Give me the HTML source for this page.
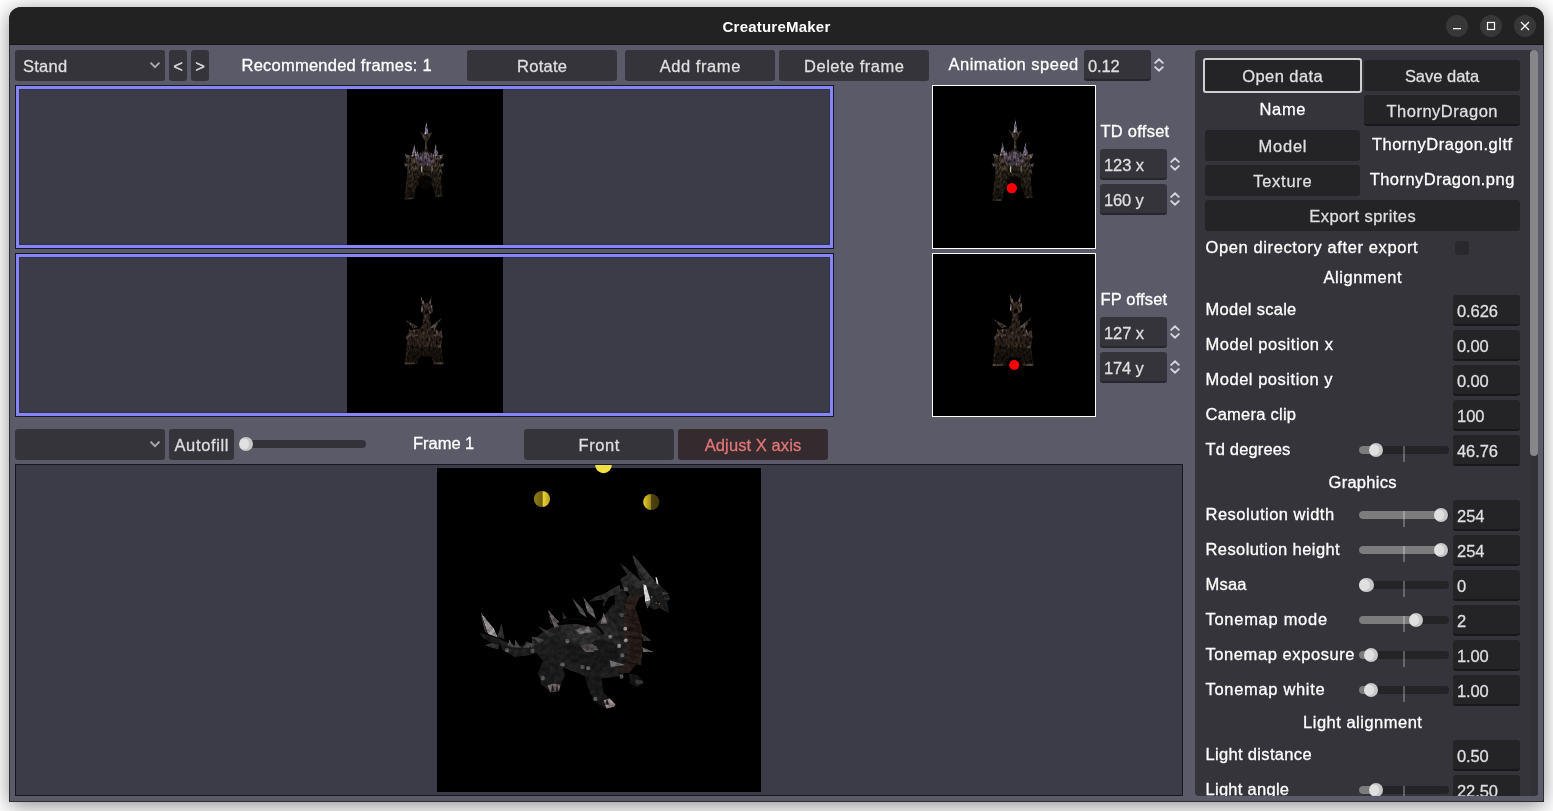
<!DOCTYPE html>
<html><head><meta charset="utf-8"><title>CreatureMaker</title>
<style>
html,body{margin:0;padding:0;}
body{width:1553px;height:811px;overflow:hidden;background:#fff;position:relative;font-family:"Liberation Sans", "DejaVu Sans", sans-serif;font-size:16.5px;color:#fff;}
.a{position:absolute;box-sizing:border-box;white-space:nowrap;}
.t{-webkit-text-stroke:0.3px currentColor;}
#win{left:9px;top:7px;width:1535px;height:795px;background:#5a5a69;border-radius:12px 12px 0 0;box-shadow:0 3.5px 20px rgba(0,0,0,.44);overflow:hidden;will-change:transform;}
#tb{left:0;top:0;width:1535px;height:37px;background:#222222;border-bottom:1px solid #161616;height:38px;}
#title{left:0;width:1535px;top:1px;height:38px;line-height:38px;letter-spacing:0.22px;text-align:center;font-weight:bold;font-size:15px;color:#fff;}
.wb{width:22px;height:22px;border-radius:11px;background:#373737;top:8px;}
.btn{background:#34343a;border-radius:3px;color:#dfdfdf;text-align:center;height:31px;line-height:33px;}
.sb .btn{background:#242427;}
.lbl{color:#fff;height:31px;line-height:31px;}
.le{background:#34343a;border-radius:3px;border-bottom:2px solid #26262d;color:#dfdfdf;height:31px;line-height:32px;padding-left:4px;text-align:left;}
.sb .le{background:#242427;border-bottom-color:#18181a;}
.fp{background:#3c3c48;border:1px solid #17172c;}
.fp i{position:absolute;left:0;top:0;right:0;bottom:0;border:3px solid #8585f4;box-shadow:inset 0 0 0 1px rgba(30,30,90,.4);}
.blk{background:#000;}
.pv{background:#000;border:1px solid #fff;}
.trk{height:8px;border-radius:4px;background:#242427;}
.fil{height:8px;border-radius:4px;background:#7c7c7d;}
.grb{width:14.4px;height:14.4px;border-radius:8px;background:radial-gradient(circle at 34% 50%,#e0e0e0 0,#e0e0e0 44%,#c7c7c7 50%);}
.tick{width:2px;height:16px;background:rgba(255,255,255,.26);}
</style></head>
<body>
<div class="a" id="win">
<div class="a" id="tb"></div>
<div class="a" id="title">CreatureMaker</div>
<div class="a wb" style="left:1437px;top:8px;width:22px;height:22px;"><svg width="22" height="22" viewBox="0 0 22 22" style="display:block"><path d="M7 13.7h8" stroke="#fff" stroke-width="1.3" fill="none"/></svg></div>
<div class="a wb" style="left:1471px;top:8px;width:22px;height:22px;"><svg width="22" height="22" viewBox="0 0 22 22" style="display:block"><rect x="7.5" y="7.5" width="7" height="7" stroke="#fff" stroke-width="1.2" fill="none"/></svg></div>
<div class="a wb" style="left:1505px;top:8px;width:22px;height:22px;"><svg width="22" height="22" viewBox="0 0 22 22" style="display:block"><path d="M7 7l8 8M15 7l-8 8" stroke="#fff" stroke-width="1.15" fill="none"/></svg></div>
<div class="a btn" style="left:6px;top:43px;width:150px;height:31px;text-align:left;padding-left:8px;"><span class="t" style="letter-spacing:0.248px;margin-right:-0.248px">Stand</span></div>
<svg class="a" style="left:140px;top:54px" width="12" height="8" viewBox="0 0 12 8"><path d="M1.5 1.6L6 6.1L10.5 1.6" stroke="#a9a9ae" stroke-width="2" fill="none" stroke-linecap="butt" stroke-linejoin="miter"/></svg>
<div class="a btn" style="left:160px;top:43px;width:18px;height:31px;"><span class="t" style="letter-spacing:-0.218px;margin-right:0.218px">&lt;</span></div>
<div class="a btn" style="left:182px;top:43px;width:18px;height:31px;"><span class="t" style="letter-spacing:-0.218px;margin-right:0.218px">&gt;</span></div>
<div class="a lbl" id="t_rec" style="left:232.5px;top:43px;height:31px;"><span class="t" style="letter-spacing:0.241px;margin-right:-0.241px">Recommended frames: 1</span></div>
<div class="a btn" style="left:458px;top:43px;width:150px;height:31px;"><span class="t" style="letter-spacing:0.284px;margin-right:-0.284px">Rotate</span></div>
<div class="a btn" style="left:616px;top:43px;width:150px;height:31px;"><span class="t" style="letter-spacing:0.569px;margin-right:-0.569px">Add frame</span></div>
<div class="a btn" style="left:770px;top:43px;width:150px;height:31px;"><span class="t" style="letter-spacing:0.487px;margin-right:-0.487px">Delete frame</span></div>
<div class="a lbl" id="t_anim" style="left:939.5px;top:42px;height:31px;"><span class="t" style="letter-spacing:0.488px;margin-right:-0.488px">Animation speed</span></div>
<div class="a le" style="left:1075px;top:43px;width:67px;height:31px;"><span class="t" style="letter-spacing:-0.121px;margin-right:0.121px">0.12</span></div>
<svg class="a" style="left:1144px;top:50px" width="12" height="16" viewBox="0 0 12 16"><path d="M2.2 5.9L6 2.4L9.8 5.9M2.2 10.1L6 13.6L9.8 10.1" stroke="#d6d6de" stroke-width="1.9" fill="none" stroke-linecap="round" stroke-linejoin="miter"/></svg>
<div class="a fp" style="left:6px;top:78px;width:819px;height:164px;"><i></i></div>
<div class="a blk" style="left:338px;top:82px;width:156px;height:156px;"><svg class="a" style="left:0px;top:0px" width="156" height="156" viewBox="0 0 164 164"><filter id="btd156" x="-5%" y="-5%" width="110%" height="110%" color-interpolation-filters="sRGB"><feTurbulence type="fractalNoise" baseFrequency="0.5 0.28" numOctaves="2" seed="5" result="n0"/><feColorMatrix in="n0" type="matrix" values="1 0 0 0 0  1 0 0 0 0  1 0 0 0 0  0 0 0 0 1" result="n"/><feComposite in="SourceGraphic" in2="n" operator="arithmetic" k1="1.7" k2="-0.2" k3="0" k4="0" result="m"/><feComposite in="m" in2="SourceGraphic" operator="in" result="c"/><feGaussianBlur in="c" stdDeviation="0.45"/></filter><linearGradient id="gbtd156" gradientUnits="userSpaceOnUse" x1="0" x2="0" y1="70" y2="112"><stop offset="0" stop-color="#000" stop-opacity="0"/><stop offset="1" stop-color="#000" stop-opacity=".5"/></linearGradient><g filter="url(#btd156)"><polygon points="62.4,72.2 66.9,69.7 73.4,69.0 79.8,65.1 82.4,63.8 85.0,65.1 91.5,69.0 96.7,69.7 99.9,72.2 98.0,79.4 99.9,87.1 98.6,97.5 100.5,107.8 101.2,113.0 92.8,113.0 90.8,104.0 86.3,97.5 82.4,94.9 78.5,97.5 72.7,104.0 70.1,115.6 60.4,116.3 60.4,107.8 62.4,97.5 63.7,85.8 61.7,79.4" fill="#3f3529"/><polygon points="65.6,72.9 73.4,70.3 78.5,76.8 74.7,85.8 66.9,87.1" fill="#5a4c3c"/><polygon points="86.3,76.8 91.5,70.3 98.0,72.9 97.3,85.8 90.2,85.8" fill="#54483a"/><polygon points="63.0,89.7 68.8,87.1 72.1,97.5 68.8,107.8 61.7,107.8" fill="#4a3e30"/><polygon points="92.8,87.1 98.6,89.7 99.9,105.3 94.1,107.8 90.8,97.5" fill="#463a2e"/><polygon points="71.4,74.2 79.8,67.7 82.4,63.8 85.7,68.4 92.1,74.8 86.3,82.0 82.4,79.4 78.5,82.0" fill="#75667e" opacity=".8"/><polygon points="76.2,44.4 81.8,47.7 85.0,47.7 90.8,44.4 87.0,50.9 84.4,55.4 82.2,55.4 79.6,50.9" fill="#55473a"/><polygon points="83.3,33.5 81.0,47.7 85.9,47.7" fill="#c0b0d2"/><polygon points="60.4,68.0 62.4,73.5 66.9,70.3" fill="#7c6e74"/><polygon points="101.8,68.0 99.9,73.5 95.4,70.3" fill="#7c6e74"/><polygon points="59.1,77.4 61.7,83.3 64.3,79.4" fill="#66585a"/><polygon points="102.9,77.4 100.3,83.3 98.0,79.4" fill="#66585a"/><polygon points="74.0,63.8 72.1,73.2 76.0,73.2" fill="#8a7c90"/><polygon points="92.1,63.8 90.2,73.2 94.1,73.2" fill="#8a7c90"/><polygon points="82.4,61.9 80.5,71.6 84.8,71.6" fill="#9888a0"/><polygon points="81.9,55.4 84.5,55.4 84.8,65.1 81.6,65.1" fill="#4a3e32"/><polygon points="70.5,57.1 67.8,70.6 73.9,69.9" fill="#a898b0"/><polygon points="93.4,57.1 90.6,69.9 96.7,70.6" fill="#a898b0"/><polygon points="77.6,65.1 76.5,73.2 79.3,73.2" fill="#6e6270"/><polygon points="88.6,65.1 87.2,73.2 90.1,73.2" fill="#6e6270"/><polygon points="64.9,79.4 62.7,89.7 66.9,88.4" fill="#5c5048"/><polygon points="98.6,79.4 96.7,88.4 100.8,89.7" fill="#5c5048"/><polygon points="77.9,81.3 79.2,81.3 79.3,88.4 78.0,88.4" fill="#e8dcb8"/><polygon points="88.2,80.7 89.7,80.7 89.8,87.1 88.4,87.1" fill="#e8dcb8"/><polygon points="74.9,93.6 82.4,89.7 89.5,93.6 88.2,102.7 82.4,107.8 76.0,102.7" fill="#120e0a"/><polygon points="60.7,114.3 70.1,114.1 70.1,116.0 60.7,116.3" fill="#8a7a68"/><polygon points="92.8,111.5 101.2,111.2 101.2,113.3 92.8,113.5" fill="#8a7a68"/></g><rect x="55" y="70" width="56" height="58" fill="url(#gbtd156)"/></svg></div>
<div class="a pv" style="left:923px;top:78px;width:164px;height:164px;"><svg class="a" style="left:-1px;top:-1px" width="164" height="164" viewBox="0 0 164 164"><filter id="btd164" x="-5%" y="-5%" width="110%" height="110%" color-interpolation-filters="sRGB"><feTurbulence type="fractalNoise" baseFrequency="0.5 0.28" numOctaves="2" seed="5" result="n0"/><feColorMatrix in="n0" type="matrix" values="1 0 0 0 0  1 0 0 0 0  1 0 0 0 0  0 0 0 0 1" result="n"/><feComposite in="SourceGraphic" in2="n" operator="arithmetic" k1="1.7" k2="-0.2" k3="0" k4="0" result="m"/><feComposite in="m" in2="SourceGraphic" operator="in" result="c"/><feGaussianBlur in="c" stdDeviation="0.45"/></filter><linearGradient id="gbtd164" gradientUnits="userSpaceOnUse" x1="0" x2="0" y1="70" y2="112"><stop offset="0" stop-color="#000" stop-opacity="0"/><stop offset="1" stop-color="#000" stop-opacity=".5"/></linearGradient><g filter="url(#btd164)"><polygon points="62.4,72.2 66.9,69.7 73.4,69.0 79.8,65.1 82.4,63.8 85.0,65.1 91.5,69.0 96.7,69.7 99.9,72.2 98.0,79.4 99.9,87.1 98.6,97.5 100.5,107.8 101.2,113.0 92.8,113.0 90.8,104.0 86.3,97.5 82.4,94.9 78.5,97.5 72.7,104.0 70.1,115.6 60.4,116.3 60.4,107.8 62.4,97.5 63.7,85.8 61.7,79.4" fill="#3f3529"/><polygon points="65.6,72.9 73.4,70.3 78.5,76.8 74.7,85.8 66.9,87.1" fill="#5a4c3c"/><polygon points="86.3,76.8 91.5,70.3 98.0,72.9 97.3,85.8 90.2,85.8" fill="#54483a"/><polygon points="63.0,89.7 68.8,87.1 72.1,97.5 68.8,107.8 61.7,107.8" fill="#4a3e30"/><polygon points="92.8,87.1 98.6,89.7 99.9,105.3 94.1,107.8 90.8,97.5" fill="#463a2e"/><polygon points="71.4,74.2 79.8,67.7 82.4,63.8 85.7,68.4 92.1,74.8 86.3,82.0 82.4,79.4 78.5,82.0" fill="#75667e" opacity=".8"/><polygon points="76.2,44.4 81.8,47.7 85.0,47.7 90.8,44.4 87.0,50.9 84.4,55.4 82.2,55.4 79.6,50.9" fill="#55473a"/><polygon points="83.3,33.5 81.0,47.7 85.9,47.7" fill="#c0b0d2"/><polygon points="60.4,68.0 62.4,73.5 66.9,70.3" fill="#7c6e74"/><polygon points="101.8,68.0 99.9,73.5 95.4,70.3" fill="#7c6e74"/><polygon points="59.1,77.4 61.7,83.3 64.3,79.4" fill="#66585a"/><polygon points="102.9,77.4 100.3,83.3 98.0,79.4" fill="#66585a"/><polygon points="74.0,63.8 72.1,73.2 76.0,73.2" fill="#8a7c90"/><polygon points="92.1,63.8 90.2,73.2 94.1,73.2" fill="#8a7c90"/><polygon points="82.4,61.9 80.5,71.6 84.8,71.6" fill="#9888a0"/><polygon points="81.9,55.4 84.5,55.4 84.8,65.1 81.6,65.1" fill="#4a3e32"/><polygon points="70.5,57.1 67.8,70.6 73.9,69.9" fill="#a898b0"/><polygon points="93.4,57.1 90.6,69.9 96.7,70.6" fill="#a898b0"/><polygon points="77.6,65.1 76.5,73.2 79.3,73.2" fill="#6e6270"/><polygon points="88.6,65.1 87.2,73.2 90.1,73.2" fill="#6e6270"/><polygon points="64.9,79.4 62.7,89.7 66.9,88.4" fill="#5c5048"/><polygon points="98.6,79.4 96.7,88.4 100.8,89.7" fill="#5c5048"/><polygon points="77.9,81.3 79.2,81.3 79.3,88.4 78.0,88.4" fill="#e8dcb8"/><polygon points="88.2,80.7 89.7,80.7 89.8,87.1 88.4,87.1" fill="#e8dcb8"/><polygon points="74.9,93.6 82.4,89.7 89.5,93.6 88.2,102.7 82.4,107.8 76.0,102.7" fill="#120e0a"/><polygon points="60.7,114.3 70.1,114.1 70.1,116.0 60.7,116.3" fill="#8a7a68"/><polygon points="92.8,111.5 101.2,111.2 101.2,113.3 92.8,113.5" fill="#8a7a68"/></g><rect x="55" y="70" width="56" height="58" fill="url(#gbtd164)"/><circle cx="79.8" cy="103.1" r="5.2" fill="#fb0207"/></svg></div>
<div class="a fp" style="left:6px;top:246px;width:819px;height:164px;"><i></i></div>
<div class="a blk" style="left:338px;top:250px;width:156px;height:156px;"><svg class="a" style="left:0px;top:0px" width="156" height="156" viewBox="0 0 164 164"><filter id="bfp156" x="-5%" y="-5%" width="110%" height="110%" color-interpolation-filters="sRGB"><feTurbulence type="fractalNoise" baseFrequency="0.5 0.28" numOctaves="2" seed="9" result="n0"/><feColorMatrix in="n0" type="matrix" values="1 0 0 0 0  1 0 0 0 0  1 0 0 0 0  0 0 0 0 1" result="n"/><feComposite in="SourceGraphic" in2="n" operator="arithmetic" k1="1.7" k2="-0.2" k3="0" k4="0" result="m"/><feComposite in="m" in2="SourceGraphic" operator="in" result="c"/><feGaussianBlur in="c" stdDeviation="0.45"/></filter><linearGradient id="gbfp156" gradientUnits="userSpaceOnUse" x1="0" x2="0" y1="72" y2="108"><stop offset="0" stop-color="#000" stop-opacity="0"/><stop offset="1" stop-color="#000" stop-opacity=".3"/></linearGradient><g filter="url(#bfp156)"><polygon points="77.1,39.9 78.8,50.6 82.4,49.3" fill="#7a6a64"/><polygon points="89.0,39.9 85.4,49.3 88.4,50.6" fill="#7a6a64"/><polygon points="78.3,50.3 83.7,48.4 89.5,50.3 90.2,58.1 87.0,60.9 81.1,60.9 77.9,58.1" fill="#4a3c32"/><polygon points="78.2,50.9 79.4,50.9 79.4,57.4 78.2,57.4" fill="#a090a0"/><polygon points="88.6,50.3 89.9,50.3 89.9,56.8 88.6,56.8" fill="#a090a0"/><polygon points="81.8,56.1 85.7,56.1 85.7,60.0 81.8,60.0" fill="#0c0806"/><polygon points="80.5,60.0 87.0,60.0 88.2,71.0 79.2,71.0" fill="#40332a"/><polygon points="62.4,82.7 66.9,76.8 76.0,75.2 79.8,70.4 87.6,70.4 90.8,75.2 98.0,77.7 100.8,84.0 99.3,94.3 101.2,109.8 101.8,112.7 90.4,112.7 88.9,104.7 77.2,104.7 73.4,112.7 60.4,112.7 61.7,99.5 63.0,89.1" fill="#3c2f25"/><polygon points="66.9,94.3 98.0,94.3 100.5,109.8 90.8,111.8 88.9,104.7 77.2,104.7 74.0,111.8 61.5,109.8" fill="#2a2018"/><polygon points="76.0,78.8 87.6,78.8 90.2,94.3 73.4,94.3" fill="#46382c"/><polygon points="60.4,65.2 69.7,75.4 75.4,73.6" fill="#6a5a50"/><polygon points="100.5,63.2 87.1,74.2 92.5,75.9" fill="#6a5a50"/><polygon points="64.9,74.9 64.3,84.0 70.1,81.4" fill="#5e5048"/><polygon points="70.1,75.5 68.8,84.0 74.7,82.7" fill="#6a5a55"/><polygon points="94.1,75.5 90.8,82.7 96.7,83.3" fill="#6a5a55"/><polygon points="99.5,74.9 96.0,82.7 100.8,84.0" fill="#5e5048"/><polygon points="62.4,82.7 64.3,82.7 64.3,86.5 62.4,86.5" fill="#7a6a70"/><polygon points="95.4,92.4 98.6,92.4 98.6,95.0 95.4,95.0" fill="#6a5a5a"/><polygon points="60.7,110.9 70.8,110.9 70.8,113.0 60.7,113.0" fill="#7a6a58"/><polygon points="90.8,110.9 101.8,110.9 101.8,113.0 90.8,113.0" fill="#7a6a58"/></g><rect x="55" y="72" width="56" height="56" fill="url(#gbfp156)"/></svg></div>
<div class="a pv" style="left:923px;top:246px;width:164px;height:164px;"><svg class="a" style="left:-1px;top:-1px" width="164" height="164" viewBox="0 0 164 164"><filter id="bfp164" x="-5%" y="-5%" width="110%" height="110%" color-interpolation-filters="sRGB"><feTurbulence type="fractalNoise" baseFrequency="0.5 0.28" numOctaves="2" seed="9" result="n0"/><feColorMatrix in="n0" type="matrix" values="1 0 0 0 0  1 0 0 0 0  1 0 0 0 0  0 0 0 0 1" result="n"/><feComposite in="SourceGraphic" in2="n" operator="arithmetic" k1="1.7" k2="-0.2" k3="0" k4="0" result="m"/><feComposite in="m" in2="SourceGraphic" operator="in" result="c"/><feGaussianBlur in="c" stdDeviation="0.45"/></filter><linearGradient id="gbfp164" gradientUnits="userSpaceOnUse" x1="0" x2="0" y1="72" y2="108"><stop offset="0" stop-color="#000" stop-opacity="0"/><stop offset="1" stop-color="#000" stop-opacity=".3"/></linearGradient><g filter="url(#bfp164)"><polygon points="77.1,39.9 78.8,50.6 82.4,49.3" fill="#7a6a64"/><polygon points="89.0,39.9 85.4,49.3 88.4,50.6" fill="#7a6a64"/><polygon points="78.3,50.3 83.7,48.4 89.5,50.3 90.2,58.1 87.0,60.9 81.1,60.9 77.9,58.1" fill="#4a3c32"/><polygon points="78.2,50.9 79.4,50.9 79.4,57.4 78.2,57.4" fill="#a090a0"/><polygon points="88.6,50.3 89.9,50.3 89.9,56.8 88.6,56.8" fill="#a090a0"/><polygon points="81.8,56.1 85.7,56.1 85.7,60.0 81.8,60.0" fill="#0c0806"/><polygon points="80.5,60.0 87.0,60.0 88.2,71.0 79.2,71.0" fill="#40332a"/><polygon points="62.4,82.7 66.9,76.8 76.0,75.2 79.8,70.4 87.6,70.4 90.8,75.2 98.0,77.7 100.8,84.0 99.3,94.3 101.2,109.8 101.8,112.7 90.4,112.7 88.9,104.7 77.2,104.7 73.4,112.7 60.4,112.7 61.7,99.5 63.0,89.1" fill="#3c2f25"/><polygon points="66.9,94.3 98.0,94.3 100.5,109.8 90.8,111.8 88.9,104.7 77.2,104.7 74.0,111.8 61.5,109.8" fill="#2a2018"/><polygon points="76.0,78.8 87.6,78.8 90.2,94.3 73.4,94.3" fill="#46382c"/><polygon points="60.4,65.2 69.7,75.4 75.4,73.6" fill="#6a5a50"/><polygon points="100.5,63.2 87.1,74.2 92.5,75.9" fill="#6a5a50"/><polygon points="64.9,74.9 64.3,84.0 70.1,81.4" fill="#5e5048"/><polygon points="70.1,75.5 68.8,84.0 74.7,82.7" fill="#6a5a55"/><polygon points="94.1,75.5 90.8,82.7 96.7,83.3" fill="#6a5a55"/><polygon points="99.5,74.9 96.0,82.7 100.8,84.0" fill="#5e5048"/><polygon points="62.4,82.7 64.3,82.7 64.3,86.5 62.4,86.5" fill="#7a6a70"/><polygon points="95.4,92.4 98.6,92.4 98.6,95.0 95.4,95.0" fill="#6a5a5a"/><polygon points="60.7,110.9 70.8,110.9 70.8,113.0 60.7,113.0" fill="#7a6a58"/><polygon points="90.8,110.9 101.8,110.9 101.8,113.0 90.8,113.0" fill="#7a6a58"/></g><rect x="55" y="72" width="56" height="56" fill="url(#gbfp164)"/><circle cx="82.2" cy="112" r="5" fill="#fb0207"/></svg></div>
<div class="a lbl" id="t_td" style="left:1091.5px;top:109px;height:31px;"><span class="t" style="letter-spacing:0.254px;margin-right:-0.254px">TD offset</span></div>
<div class="a le" style="left:1091px;top:142px;width:67px;height:31px;"><span class="t" style="letter-spacing:-0.069px;margin-right:0.069px">123 x</span></div>
<svg class="a" style="left:1160px;top:149px" width="12" height="16" viewBox="0 0 12 16"><path d="M2.2 5.9L6 2.4L9.8 5.9M2.2 10.1L6 13.6L9.8 10.1" stroke="#d6d6de" stroke-width="1.9" fill="none" stroke-linecap="round" stroke-linejoin="miter"/></svg>
<div class="a le" style="left:1091px;top:177px;width:67px;height:31px;"><span class="t" style="letter-spacing:-0.158px;margin-right:0.158px">160 y</span></div>
<svg class="a" style="left:1160px;top:184px" width="12" height="16" viewBox="0 0 12 16"><path d="M2.2 5.9L6 2.4L9.8 5.9M2.2 10.1L6 13.6L9.8 10.1" stroke="#d6d6de" stroke-width="1.9" fill="none" stroke-linecap="round" stroke-linejoin="miter"/></svg>
<div class="a lbl" id="t_fpo" style="left:1091.5px;top:277px;height:31px;"><span class="t" style="letter-spacing:0.155px;margin-right:-0.155px">FP offset</span></div>
<div class="a le" style="left:1091px;top:310px;width:67px;height:31px;"><span class="t" style="letter-spacing:-0.069px;margin-right:0.069px">127 x</span></div>
<svg class="a" style="left:1160px;top:317px" width="12" height="16" viewBox="0 0 12 16"><path d="M2.2 5.9L6 2.4L9.8 5.9M2.2 10.1L6 13.6L9.8 10.1" stroke="#d6d6de" stroke-width="1.9" fill="none" stroke-linecap="round" stroke-linejoin="miter"/></svg>
<div class="a le" style="left:1091px;top:345px;width:67px;height:31px;"><span class="t" style="letter-spacing:-0.158px;margin-right:0.158px">174 y</span></div>
<svg class="a" style="left:1160px;top:352px" width="12" height="16" viewBox="0 0 12 16"><path d="M2.2 5.9L6 2.4L9.8 5.9M2.2 10.1L6 13.6L9.8 10.1" stroke="#d6d6de" stroke-width="1.9" fill="none" stroke-linecap="round" stroke-linejoin="miter"/></svg>
<div class="a btn" style="left:6px;top:422px;width:150px;height:31px;"></div>
<svg class="a" style="left:140px;top:433px" width="12" height="8" viewBox="0 0 12 8"><path d="M1.5 1.6L6 6.1L10.5 1.6" stroke="#a9a9ae" stroke-width="2" fill="none" stroke-linecap="butt" stroke-linejoin="miter"/></svg>
<div class="a btn" style="left:160px;top:422px;width:65px;height:31px;"><span class="t" style="letter-spacing:0.650px;margin-right:-0.650px">Autofill</span></div>
<div class="a trk" style="left:230px;top:433px;width:127px;height:8px;background:#323238;"></div>
<div class="a grb" style="left:229.5px;top:429.8px;"></div>
<div class="a lbl" id="t_frame" style="left:404px;top:421px;height:31px;"><span class="t" style="letter-spacing:-0.029px;margin-right:0.029px">Frame 1</span></div>
<div class="a btn" style="left:515px;top:422px;width:150px;height:31px;"><span class="t" style="letter-spacing:0.579px;margin-right:-0.579px">Front</span></div>
<div class="a btn" style="left:669px;top:422px;width:150px;height:31px;color:#e27676;background:#352b2f;"><span class="t" style="letter-spacing:0.088px;margin-right:-0.088px">Adjust X axis</span></div>
<div class="a " style="left:6px;top:457px;width:1168px;height:332px;background:#3c3c48;border:1px solid #17171f;"></div>
<div class="a blk" style="left:428px;top:461px;width:324px;height:324px;overflow:visible;"><svg class="a" style="left:0;top:-3px" width="324" height="327" viewBox="437 465 324 327"><defs><filter id="bm" x="-5%" y="-5%" width="110%" height="110%" color-interpolation-filters="sRGB"><feTurbulence type="fractalNoise" baseFrequency="0.22 0.22" numOctaves="2" seed="11" result="n0"/><feColorMatrix in="n0" type="matrix" values="1 0 0 0 0  1 0 0 0 0  1 0 0 0 0  0 0 0 0 1" result="n"/><feComposite in="SourceGraphic" in2="n" operator="arithmetic" k1="0.9" k2="0.5" k3="0" k4="0" result="m"/><feComposite in="m" in2="SourceGraphic" operator="in" result="c"/><feGaussianBlur in="c" stdDeviation="0.5"/></filter><linearGradient id="y1" x1="0" x2="1" y1="0" y2="0"><stop offset="0" stop-color="#8f7d14"/><stop offset=".52" stop-color="#6f6010"/><stop offset=".56" stop-color="#ecd432"/><stop offset="1" stop-color="#b39c20"/></linearGradient><linearGradient id="y2" x1="0" x2="1" y1="0" y2="0"><stop offset="0" stop-color="#ead230"/><stop offset=".46" stop-color="#9c8818"/><stop offset=".5" stop-color="#4e4410"/><stop offset="1" stop-color="#40380c"/></linearGradient></defs><circle cx="603.5" cy="465" r="8.3" fill="#f1e043"/><circle cx="542" cy="499" r="8.1" fill="url(#y1)"/><circle cx="651.3" cy="502" r="8.1" fill="url(#y2)"/><g filter="url(#bm)"><polygon points="478.9,632.6 487.8,634.8 498.1,638.5 499.6,644.4 492.2,642.9 483.3,638.5" fill="#191919"/><polygon points="484.1,645.1 492.2,642.9 499.6,644.4 498.1,649.6 490.7,647.4" fill="#353535"/><polygon points="497.4,637.7 508.5,642.9 518.8,645.9 532.1,642.9 541.0,638.5 546.9,644.4 541.0,651.8 529.2,655.5 514.4,657.0 502.6,650.3" fill="#1e1e1e"/><polygon points="480.4,612.1 487.8,634.0 498.1,637.7 493.7,628.1" fill="#9a9595"/><polygon points="480.4,612.1 487.8,634.0 484.8,631.8 481.5,619.2" fill="#333030"/><polygon points="501.5,622.9 497.1,637.0 504.8,639.2" fill="#333030"/><polygon points="509.2,639.2 507.7,645.9 514.4,647.4" fill="#555252"/><polygon points="515.1,639.2 514.4,647.4 521.1,648.1" fill="#484444"/><polygon points="526.2,641.4 523.3,648.1 530.7,647.4" fill="#494646"/><polygon points="531.4,636.3 532.1,644.4 540.3,642.2" fill="#363333"/><polygon points="628.8,673.6 637.7,675.1 643.6,682.5 637.7,686.9 630.3,684.0" fill="#161616"/><polygon points="634.7,679.3 643.6,680.7 642.8,684.0 636.2,683.7" fill="#383535"/><polygon points="614.0,587.9 624.4,589.4 627.4,596.8 624.4,607.1 623.7,619.0 624.4,630.8 626.6,642.7 628.1,654.5 628.8,665.0 609.6,665.0 606.6,648.6 609.6,627.9 611.8,614.5 614.8,604.2" fill="#1e1e1e"/><polygon points="534.0,638.5 543.9,631.1 558.7,625.0 575.9,623.7 593.2,627.4 605.5,613.9 612.9,604.0 622.8,611.4 630.2,628.7 632.7,648.4 630.2,663.2 622.8,675.5 608.0,678.0 598.1,679.2 583.3,675.5 563.6,668.1 546.3,664.4 536.5,653.3" fill="#1f1f1f"/><polygon points="558.7,625.0 575.9,623.7 593.2,627.4 600.6,638.5 583.3,645.9 566.1,641.0" fill="#2b2b2b"/><polygon points="593.2,627.4 605.5,613.9 617.9,628.7 620.3,645.9 600.6,638.5" fill="#262626"/><polygon points="566.1,641.0 583.3,645.9 600.6,638.5 620.3,645.9 617.9,664.4 593.2,669.4 568.5,659.5" fill="#191919"/><polygon points="536.5,645.9 566.1,641.0 568.5,659.5 546.3,664.4" fill="#1d1d1d"/><path d="M559.9 623.1 Q571.0 616.4 584.3 620.1 T603.6 634.2" stroke="#070707" stroke-width="2.2" fill="none"/><polygon points="645.1,594.6 639.2,598.3 635.5,607.1 636.2,619.0 639.2,630.8 641.4,642.7 642.1,654.5 641.4,665.0 628.8,665.0 628.1,654.5 626.6,642.7 624.4,630.8 623.7,619.0 624.4,607.1 627.4,596.8 631.8,593.1" fill="#2c211d"/><polygon points="625.8,610.0 636.2,610.0 642.1,629.2 642.1,648.5 637.7,663.3 628.8,673.6 616.9,672.1 622.9,666.2 628.8,657.4 630.3,642.6 628.8,626.3" fill="#251c19"/><path d="M623.7 602.0 L639.2 605.2" stroke="#150d0b" stroke-width="0.55" fill="none"/><path d="M624.2 608.6 L639.7 611.9" stroke="#150d0b" stroke-width="0.55" fill="none"/><path d="M624.7 615.3 L640.3 618.5" stroke="#150d0b" stroke-width="0.55" fill="none"/><path d="M625.3 621.9 L640.8 625.2" stroke="#150d0b" stroke-width="0.55" fill="none"/><path d="M625.8 629.3 L641.4 632.6" stroke="#150d0b" stroke-width="0.55" fill="none"/><path d="M626.4 636.0 L641.9 639.3" stroke="#150d0b" stroke-width="0.55" fill="none"/><path d="M626.9 642.7 L642.4 645.9" stroke="#150d0b" stroke-width="0.55" fill="none"/><path d="M627.4 649.3 L643.0 652.6" stroke="#150d0b" stroke-width="0.55" fill="none"/><path d="M628.0 656.0 L643.5 659.2" stroke="#150d0b" stroke-width="0.55" fill="none"/><path d="M628.5 662.6 L644.0 665.9" stroke="#150d0b" stroke-width="0.55" fill="none"/><path d="M628.8 618.9 L642.4 620.9" stroke="#130c0a" stroke-width="0.55" fill="none"/><path d="M628.8 627.8 L642.4 629.8" stroke="#130c0a" stroke-width="0.55" fill="none"/><path d="M628.8 636.6 L642.4 638.7" stroke="#130c0a" stroke-width="0.55" fill="none"/><path d="M628.8 645.5 L642.4 647.6" stroke="#130c0a" stroke-width="0.55" fill="none"/><path d="M622.9 654.4 L638.0 656.5" stroke="#130c0a" stroke-width="0.55" fill="none"/><path d="M622.9 661.8 L638.0 663.9" stroke="#130c0a" stroke-width="0.55" fill="none"/><polygon points="588.5,601.6 594.7,597.2 603.6,593.9 615.4,586.8 620.0,584.6 620.0,591.3 612.5,595.7 603.6,598.7 596.2,599.4" fill="#2a2a2a"/><polygon points="588.9,602.0 594.8,597.1 605.2,593.1 614.8,587.9 622.9,589.4 617.0,594.6 609.6,596.1 605.2,604.2 602.2,608.6 603.7,599.7 596.3,600.5" fill="#292929"/><polygon points="632.1,554.2 637.0,559.1 649.5,574.6 656.9,583.5 651.0,585.0 642.1,576.8 634.7,564.2" fill="#333333"/><polygon points="632.1,554.2 634.7,564.2 642.1,576.8 651.0,585.0 647.3,585.2 639.2,577.8" fill="#212121"/><polygon points="619.2,563.1 624.4,565.7 639.2,579.0 645.1,586.4 637.7,587.9 628.8,576.8" fill="#2b2b2b"/><polygon points="620.0,579.0 627.4,574.6 639.2,582.0 636.2,589.4 628.8,592.4 622.9,587.9" fill="#292929"/><polygon points="624.4,589.4 628.8,582.0 639.2,580.5 651.0,579.8 660.6,585.7 666.6,591.6 670.6,598.6 667.3,602.0 669.5,613.1 662.9,607.1 654.0,610.1 649.5,607.1 645.1,593.8 639.2,594.6 630.3,595.3" fill="#1c1c1c"/><polygon points="628.8,582.0 639.2,580.5 651.0,579.8 660.6,585.7 654.0,589.4 643.6,585.0 636.2,589.4" fill="#2f2f2f"/><polygon points="662.1,592.1 669.1,593.2 662.9,595.3" fill="#454545"/><polygon points="664.0,596.5 670.9,599.2 664.6,600.0" fill="#353535"/><polygon points="661.1,604.9 669.7,613.4 659.9,608.6" fill="#262626"/><polygon points="645.1,602.1 650.4,600.0 649.5,604.9 647.3,608.9" fill="#565656"/><polygon points="643.3,584.2 646.0,585.2 650.4,600.0 645.1,602.1" fill="#dfdfdf"/><polygon points="655.2,576.8 657.1,577.4 658.9,584.7 656.6,583.8" fill="#d6d6d6"/><circle cx="651.9" cy="596.8" r="0.9" fill="#6878b0"/><circle cx="656.2" cy="603.0" r="0.7" fill="#c88a60"/><circle cx="659.3" cy="603.6" r="0.7" fill="#c88a60"/><polygon points="547.4,609.3 552.5,623.8 559.9,622.4" fill="#585252"/><polygon points="547.4,609.3 550.3,623.8 552.5,623.8" fill="#292626"/><polygon points="562.1,611.3 562.9,619.4 567.3,617.9" fill="#2c2c2c"/><polygon points="571.5,597.2 579.9,613.5 587.3,617.9 582.9,609.0" fill="#4b4848"/><polygon points="582.9,596.5 587.3,612.0 596.2,619.4 593.2,609.0" fill="#645f5f"/><polygon points="603.6,612.0 600.6,623.8 607.3,623.8" fill="#726a6a"/><polygon points="537.7,626.1 548.8,637.1 554.7,634.2" fill="#353232"/><polygon points="531.8,636.4 540.0,643.4 544.4,640.1" fill="#454141"/><polygon points="525.9,641.6 531.8,647.8 535.5,644.5" fill="#494545"/><polygon points="531.5,636.6 538.9,642.2 545.1,639.8" fill="#454545"/><polygon points="574.7,629.7 582.9,626.8 588.8,631.2 579.9,634.2" fill="#656262"/><polygon points="579.9,646.0 588.8,644.5 594.7,651.9 585.8,651.9" fill="#565353"/><polygon points="577.0,629.2 588.8,626.3 591.8,632.2 581.4,633.7" fill="#716d6d"/><polygon points="609.5,660.3 625.1,665.0 611.0,667.0" fill="#717171"/><polygon points="642.1,647.0 654.7,652.2 642.8,652.2" fill="#616161"/><polygon points="643.6,635.2 652.5,641.4 643.6,640.3" fill="#303030"/><polygon points="641.4,633.0 651.0,639.7 642.9,641.2" fill="#353535"/><polygon points="580.0,645.5 591.8,643.3 599.2,650.0 587.4,651.4" fill="#4d4949"/><polygon points="548.9,610.0 559.2,626.3 554.1,627.8" fill="#645b5b"/><polygon points="582.9,667.7 599.2,669.2 602.1,681.0 603.6,692.9 612.5,700.3 615.5,704.7 606.6,708.4 599.2,704.7 590.3,694.3 585.9,681.0" fill="#1a1a1a"/><polygon points="603.6,700.3 609.5,698.5 615.8,704.7 614.0,706.9 606.6,708.8" fill="#988a8a"/><polygon points="606.9,698.8 609.3,704.7 605.1,704.7" fill="#1e1919"/><polygon points="542.9,660.8 551.8,657.9 562.1,663.8 565.1,675.6 559.2,687.5 550.3,691.9 541.4,684.5 537.7,672.7" fill="#1c1c1c"/><polygon points="547.4,685.2 553.3,683.8 560.7,684.8 559.2,691.2 550.3,692.2" fill="#746a6a"/><polygon points="552.1,684.2 554.5,691.2 551.1,691.9" fill="#1e1919"/><polygon points="557.0,684.2 558.4,690.7 555.6,691.3" fill="#1e1919"/><circle cx="506.9" cy="650.1" r="2.2" fill="#585858"/><circle cx="532.3" cy="650.9" r="2.2" fill="#585858"/><circle cx="562.4" cy="664.4" r="2.2" fill="#585858"/><circle cx="582.6" cy="666.9" r="2.2" fill="#585858"/><circle cx="588.3" cy="668.1" r="2.2" fill="#585858"/><circle cx="542.6" cy="678.0" r="2.2" fill="#585858"/><circle cx="595.2" cy="699.0" r="2.2" fill="#585858"/><circle cx="621.6" cy="676.8" r="2.2" fill="#585858"/><circle cx="622.1" cy="655.3" r="2.2" fill="#585858"/><circle cx="619.1" cy="645.9" r="2.2" fill="#585858"/><circle cx="610.5" cy="636.6" r="2.2" fill="#585858"/><circle cx="621.6" cy="615.1" r="2.2" fill="#585858"/><circle cx="626.0" cy="589.2" r="2.2" fill="#585858"/><circle cx="584.1" cy="628.7" r="2.2" fill="#585858"/><circle cx="567.3" cy="641.0" r="2.2" fill="#585858"/><circle cx="595.2" cy="647.9" r="2.2" fill="#585858"/><circle cx="625.3" cy="628.7" r="1.9" fill="#a8a0a0"/><circle cx="625.8" cy="640.5" r="1.9" fill="#a8a0a0"/><rect x="608.7" y="635.4" width="3" height="3" fill="#9c9c9c"/><rect x="617.6" y="644.5" width="3" height="3" fill="#9c9c9c"/></g></svg></div>
<div class="sb">
<div class="a " style="left:1186px;top:43px;width:343px;height:746px;background:#34343a;border-radius:4px;"></div>
<div class="a " style="left:1521px;top:43px;width:8px;height:746px;background:#313136;border-radius:0 4px 4px 0;"></div>
<div class="a " style="left:1521px;top:43px;width:8px;height:405.5px;background:#87878a;border-radius:4px;"></div>
<div class="a" style="left:1186px;top:43px;width:335px;height:746px;overflow:hidden;">
<div class="a btn" style="left:10px;top:10px;width:155px;height:31px;box-shadow:0 0 0 2px #cfcfcf;border-radius:1px;"><span class="t" style="letter-spacing:0.442px;margin-right:-0.442px">Open data</span></div>
<div class="a btn" style="left:169px;top:10px;width:156px;height:31px;"><span class="t" style="letter-spacing:-0.008px;margin-right:0.008px">Save data</span></div>
<div class="a lbl" style="left:10px;top:44px;width:155px;height:31px;text-align:center;"><span class="t" style="letter-spacing:0.614px;margin-right:-0.614px">Name</span></div>
<div class="a le" style="left:169px;top:45px;width:156px;height:31px;text-align:center;padding-left:0;"><span class="t" style="letter-spacing:0.509px;margin-right:-0.509px">ThornyDragon</span></div>
<div class="a btn" style="left:10px;top:80px;width:155px;height:31px;"><span class="t" style="letter-spacing:0.754px;margin-right:-0.754px">Model</span></div>
<div class="a lbl" id="t_gltf" style="left:169px;top:79px;width:156px;height:31px;text-align:center;"><span class="t" style="letter-spacing:0.510px;margin-right:-0.510px">ThornyDragon.gltf</span></div>
<div class="a btn" style="left:10px;top:115px;width:155px;height:31px;"><span class="t" style="letter-spacing:0.750px;margin-right:-0.750px">Texture</span></div>
<div class="a lbl" style="left:169px;top:114px;width:156px;height:31px;text-align:center;"><span class="t" style="letter-spacing:0.476px;margin-right:-0.476px">ThornyDragon.png</span></div>
<div class="a btn" style="left:10px;top:150px;width:315px;height:31px;"><span class="t" style="letter-spacing:0.420px;margin-right:-0.420px">Export sprites</span></div>
<div class="a lbl" id="t_open" style="left:10.5px;top:182px;height:31px;"><span class="t" style="letter-spacing:0.613px;margin-right:-0.613px">Open directory after export</span></div>
<div class="a " style="left:260px;top:191px;width:14px;height:14px;background:#29292d;border-radius:3px;"></div>
<div class="a lbl" style="left:10px;top:212px;width:315px;height:31px;text-align:center;"><span class="t" style="letter-spacing:0.593px;margin-right:-0.593px">Alignment</span></div>
<div class="a lbl" style="left:10.5px;top:244px;height:31px;"><span class="t" style="letter-spacing:0.273px;margin-right:-0.273px">Model scale</span></div>
<div class="a le" style="left:258px;top:245px;width:67px;height:31px;"><span class="t" style="letter-spacing:-0.099px;margin-right:0.099px">0.626</span></div>
<div class="a lbl" style="left:10.5px;top:279px;height:31px;"><span class="t" style="letter-spacing:0.550px;margin-right:-0.550px">Model position x</span></div>
<div class="a le" style="left:258px;top:280px;width:67px;height:31px;"><span class="t" style="letter-spacing:-0.121px;margin-right:0.121px">0.00</span></div>
<div class="a lbl" style="left:10.5px;top:314px;height:31px;"><span class="t" style="letter-spacing:0.524px;margin-right:-0.524px">Model position y</span></div>
<div class="a le" style="left:258px;top:315px;width:67px;height:31px;"><span class="t" style="letter-spacing:-0.121px;margin-right:0.121px">0.00</span></div>
<div class="a lbl" style="left:10.5px;top:349px;height:31px;"><span class="t" style="letter-spacing:0.244px;margin-right:-0.244px">Camera clip</span></div>
<div class="a le" style="left:258px;top:350px;width:67px;height:31px;"><span class="t" style="letter-spacing:-0.034px;margin-right:0.034px">100</span></div>
<div class="a lbl" style="left:10.5px;top:384px;height:31px;"><span class="t" style="letter-spacing:0.156px;margin-right:-0.156px">Td degrees</span></div>
<div class="a le" style="left:258px;top:385px;width:67px;height:31px;"><span class="t" style="letter-spacing:-0.099px;margin-right:0.099px">46.76</span></div>
<div class="a trk" style="left:164px;top:396px;width:90px;height:8px;"></div>
<div class="a fil" style="left:164px;top:396px;width:18.700000000000045px;height:8px;"></div>
<div class="a tick" style="left:208px;top:396px;width:2px;height:16px;"></div>
<div class="a grb" style="left:173.5px;top:392.8px;"></div>
<div class="a lbl" style="left:10px;top:417px;width:315px;height:31px;text-align:center;"><span class="t" style="letter-spacing:0.260px;margin-right:-0.260px">Graphics</span></div>
<div class="a lbl" style="left:10.5px;top:449px;height:31px;"><span class="t" style="letter-spacing:0.504px;margin-right:-0.504px">Resolution width</span></div>
<div class="a le" style="left:258px;top:450px;width:67px;height:31px;"><span class="t" style="letter-spacing:-0.034px;margin-right:0.034px">254</span></div>
<div class="a trk" style="left:164px;top:461px;width:90px;height:8px;"></div>
<div class="a fil" style="left:164px;top:461px;width:83.79999999999995px;height:8px;"></div>
<div class="a tick" style="left:208px;top:461px;width:2px;height:16px;"></div>
<div class="a grb" style="left:238.5999999999999px;top:457.8px;"></div>
<div class="a lbl" style="left:10.5px;top:484px;height:31px;"><span class="t" style="letter-spacing:0.415px;margin-right:-0.415px">Resolution height</span></div>
<div class="a le" style="left:258px;top:485px;width:67px;height:31px;"><span class="t" style="letter-spacing:-0.034px;margin-right:0.034px">254</span></div>
<div class="a trk" style="left:164px;top:496px;width:90px;height:8px;"></div>
<div class="a fil" style="left:164px;top:496px;width:83.79999999999995px;height:8px;"></div>
<div class="a tick" style="left:208px;top:496px;width:2px;height:16px;"></div>
<div class="a grb" style="left:238.5999999999999px;top:492.79999999999995px;"></div>
<div class="a lbl" style="left:10.5px;top:519px;height:31px;"><span class="t" style="letter-spacing:0.203px;margin-right:-0.203px">Msaa</span></div>
<div class="a le" style="left:258px;top:520px;width:67px;height:31px;"><span class="t" style="letter-spacing:-0.039px;margin-right:0.039px">0</span></div>
<div class="a trk" style="left:164px;top:531px;width:90px;height:8px;"></div>
<div class="a fil" style="left:164px;top:531px;width:9.400000000000091px;height:8px;"></div>
<div class="a tick" style="left:208px;top:531px;width:2px;height:16px;"></div>
<div class="a grb" style="left:164.20000000000005px;top:527.8px;"></div>
<div class="a lbl" style="left:10.5px;top:554px;height:31px;"><span class="t" style="letter-spacing:0.712px;margin-right:-0.712px">Tonemap mode</span></div>
<div class="a le" style="left:258px;top:555px;width:67px;height:31px;"><span class="t" style="letter-spacing:-0.039px;margin-right:0.039px">2</span></div>
<div class="a trk" style="left:164px;top:566px;width:90px;height:8px;"></div>
<div class="a fil" style="left:164px;top:566px;width:58.799999999999955px;height:8px;"></div>
<div class="a tick" style="left:208px;top:566px;width:2px;height:16px;"></div>
<div class="a grb" style="left:213.5999999999999px;top:562.8px;"></div>
<div class="a lbl" style="left:10.5px;top:589px;height:31px;"><span class="t" style="letter-spacing:0.576px;margin-right:-0.576px">Tonemap exposure</span></div>
<div class="a le" style="left:258px;top:590px;width:67px;height:31px;"><span class="t" style="letter-spacing:-0.121px;margin-right:0.121px">1.00</span></div>
<div class="a trk" style="left:164px;top:601px;width:90px;height:8px;"></div>
<div class="a fil" style="left:164px;top:601px;width:13.700000000000045px;height:8px;"></div>
<div class="a tick" style="left:208px;top:601px;width:2px;height:16px;"></div>
<div class="a grb" style="left:168.5px;top:597.8px;"></div>
<div class="a lbl" style="left:10.5px;top:624px;height:31px;"><span class="t" style="letter-spacing:0.679px;margin-right:-0.679px">Tonemap white</span></div>
<div class="a le" style="left:258px;top:625px;width:67px;height:31px;"><span class="t" style="letter-spacing:-0.121px;margin-right:0.121px">1.00</span></div>
<div class="a trk" style="left:164px;top:636px;width:90px;height:8px;"></div>
<div class="a fil" style="left:164px;top:636px;width:13.700000000000045px;height:8px;"></div>
<div class="a tick" style="left:208px;top:636px;width:2px;height:16px;"></div>
<div class="a grb" style="left:168.5px;top:632.8px;"></div>
<div class="a lbl" style="left:10px;top:657px;width:315px;height:31px;text-align:center;"><span class="t" style="letter-spacing:0.496px;margin-right:-0.496px">Light alignment</span></div>
<div class="a lbl" style="left:10.5px;top:689px;height:31px;"><span class="t" style="letter-spacing:0.330px;margin-right:-0.330px">Light distance</span></div>
<div class="a le" style="left:258px;top:690px;width:67px;height:31px;"><span class="t" style="letter-spacing:-0.121px;margin-right:0.121px">0.50</span></div>
<div class="a lbl" style="left:10.5px;top:724px;height:31px;"><span class="t" style="letter-spacing:0.280px;margin-right:-0.280px">Light angle</span></div>
<div class="a le" style="left:258px;top:725px;width:67px;height:31px;"><span class="t" style="letter-spacing:-0.099px;margin-right:0.099px">22.50</span></div>
<div class="a trk" style="left:164px;top:736px;width:90px;height:8px;"></div>
<div class="a fil" style="left:164px;top:736px;width:18.700000000000045px;height:8px;"></div>
<div class="a tick" style="left:208px;top:736px;width:2px;height:16px;"></div>
<div class="a grb" style="left:173.5px;top:732.8px;"></div>
</div>
</div>
<div class="a" style="left:0;top:38px;width:1535px;height:757px;border:1px solid #2e2e31;border-top:none;pointer-events:none"></div>
</div>
</body></html>
